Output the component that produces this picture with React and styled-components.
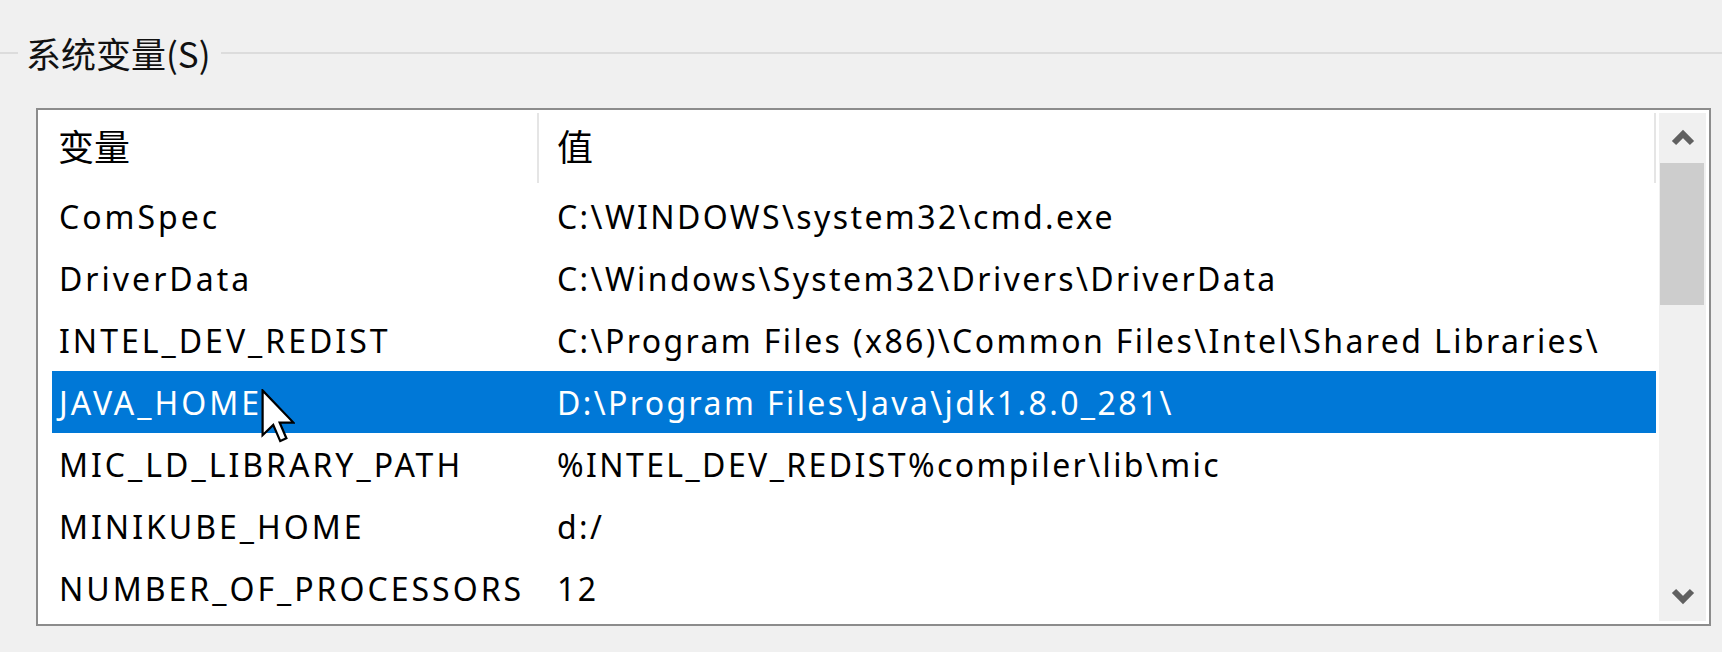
import styled, { createGlobalStyle } from "styled-components";

const GlobalStyle = createGlobalStyle`
    html, body {
        margin: 0;
        padding: 0;
        background-color: #f0f0f0;
    }
`;

const StyledPage = styled.div`
    position: relative;
    width: 1722px;
    height: 652px;
    overflow: hidden;
    background-color: #f0f0f0;
    font-family: "Noto Sans", "Noto Sans CJK SC", sans-serif;
    color: #000;
`;

const StyledGroupHeader = styled.div`
    display: flex;
    align-items: center;
    height: 46px;
    margin-top: 30px;
`;

const StyledGroupLine = styled.div`
    height: 2px;
    background-color: #dcdcdc;
    width: ${(props) => (props.$grow ? "auto" : "18px")};
    flex: ${(props) => (props.$grow ? 1 : "none")};
`;

const StyledLegend = styled.span`
    font-family: "Noto Sans CJK SC", sans-serif;
    font-size: 35px;
    line-height: 46px;
    padding: 0 10px 0 8px;
    color: #111;
`;

const StyledListBox = styled.div`
    box-sizing: border-box;
    display: flex;
    width: 1675px;
    height: 518px;
    margin: 32px 0 0 36px;
    padding: 3px;
    border: 2px solid #8c8c8c;
    background-color: #fff;
`;

const StyledContent = styled.div`
    flex: 1;
    padding: 0 3px 0 11px;
    overflow: hidden;
`;

const StyledHeader = styled.div`
    display: flex;
    height: 72px;
    padding-bottom: 2px;
    box-sizing: border-box;
`;

const StyledHeaderCell = styled.div`
    box-sizing: border-box;
    display: flex;
    align-items: center;
    width: ${(props) => (props.$first ? "487px" : "auto")};
    flex: ${(props) => (props.$first ? "none" : 1)};
    padding: 0 0 6px ${(props) => (props.$first ? "6px" : "18px")};
    border-right: 2px solid #e5e5e5;
    font-family: "Noto Sans CJK SC", sans-serif;
    font-size: 36px;
`;

const StyledRow = styled.div`
    display: flex;
    align-items: center;
    height: 62px;
    background-color: ${(props) => (props.$selected ? "#0078d7" : "transparent")};
    color: ${(props) => (props.$selected ? "#fff" : "#000")};
`;

const StyledCell = styled.div`
    box-sizing: border-box;
    width: ${(props) => (props.$first ? "487px" : "auto")};
    flex: ${(props) => (props.$first ? "none" : 1)};
    padding-left: ${(props) => (props.$first ? "7px" : "18px")};
    font-size: 32px;
    letter-spacing: ${(props) => (props.$first ? "3px" : "2.4px")};
    white-space: nowrap;
`;

const StyledScrollbar = styled.div`
    display: flex;
    flex-direction: column;
    width: 47px;
    background-color: #f0f0f0;
`;

const StyledArrowButton = styled.div`
    display: flex;
    align-items: center;
    justify-content: center;
    height: 50px;
    margin-top: ${(props) => (props.$down ? "auto" : 0)};
`;

const StyledThumb = styled.div`
    height: 142px;
    margin: 0 2px 0 1px;
    background-color: #cdcdcd;
`;

const StyledCursor = styled.svg`
    position: absolute;
    left: 261px;
    top: 389px;
`;

const variables = [
    ["ComSpec", "C:\\WINDOWS\\system32\\cmd.exe"],
    ["DriverData", "C:\\Windows\\System32\\Drivers\\DriverData"],
    ["INTEL_DEV_REDIST", "C:\\Program Files (x86)\\Common Files\\Intel\\Shared Libraries\\"],
    ["JAVA_HOME", "D:\\Program Files\\Java\\jdk1.8.0_281\\"],
    ["MIC_LD_LIBRARY_PATH", "%INTEL_DEV_REDIST%compiler\\lib\\mic"],
    ["MINIKUBE_HOME", "d:/"],
    ["NUMBER_OF_PROCESSORS", "12"],
];

function Chevron({ down }) {
    return (
        <svg width="24" height="18" viewBox="0 0 24 18">
            <polyline
                points={down ? "3,4 12,13 21,4" : "3,14 12,5 21,14"}
                fill="none"
                stroke="#606060"
                strokeWidth="6"
                strokeLinejoin="miter"
            />
        </svg>
    );
}

function App() {
    return (
        <StyledPage>
            <GlobalStyle />
            <StyledGroupHeader>
                <StyledGroupLine />
                <StyledLegend>系统变量(S)</StyledLegend>
                <StyledGroupLine $grow />
            </StyledGroupHeader>
            <StyledListBox>
                <StyledContent>
                    <StyledHeader>
                        <StyledHeaderCell $first>变量</StyledHeaderCell>
                        <StyledHeaderCell>值</StyledHeaderCell>
                    </StyledHeader>
                    {variables.map(([name, value]) => (
                        <StyledRow key={name} $selected={name === "JAVA_HOME"}>
                            <StyledCell $first>{name}</StyledCell>
                            <StyledCell>{value}</StyledCell>
                        </StyledRow>
                    ))}
                </StyledContent>
                <StyledScrollbar>
                    <StyledArrowButton>
                        <Chevron />
                    </StyledArrowButton>
                    <StyledThumb />
                    <StyledArrowButton $down>
                        <Chevron down />
                    </StyledArrowButton>
                </StyledScrollbar>
            </StyledListBox>
            <StyledCursor width="34" height="56" viewBox="0 0 12 20">
                <path
                    d="M0.5 0.5 L0.5 16.5 L4.3 12.8 L6.8 18.6 L9 17.6 L6.6 12 L11.5 12 Z"
                    fill="#fff"
                    stroke="#000"
                    strokeWidth="0.8"
                    strokeLinejoin="miter"
                />
            </StyledCursor>
        </StyledPage>
    );
}

export default App;
